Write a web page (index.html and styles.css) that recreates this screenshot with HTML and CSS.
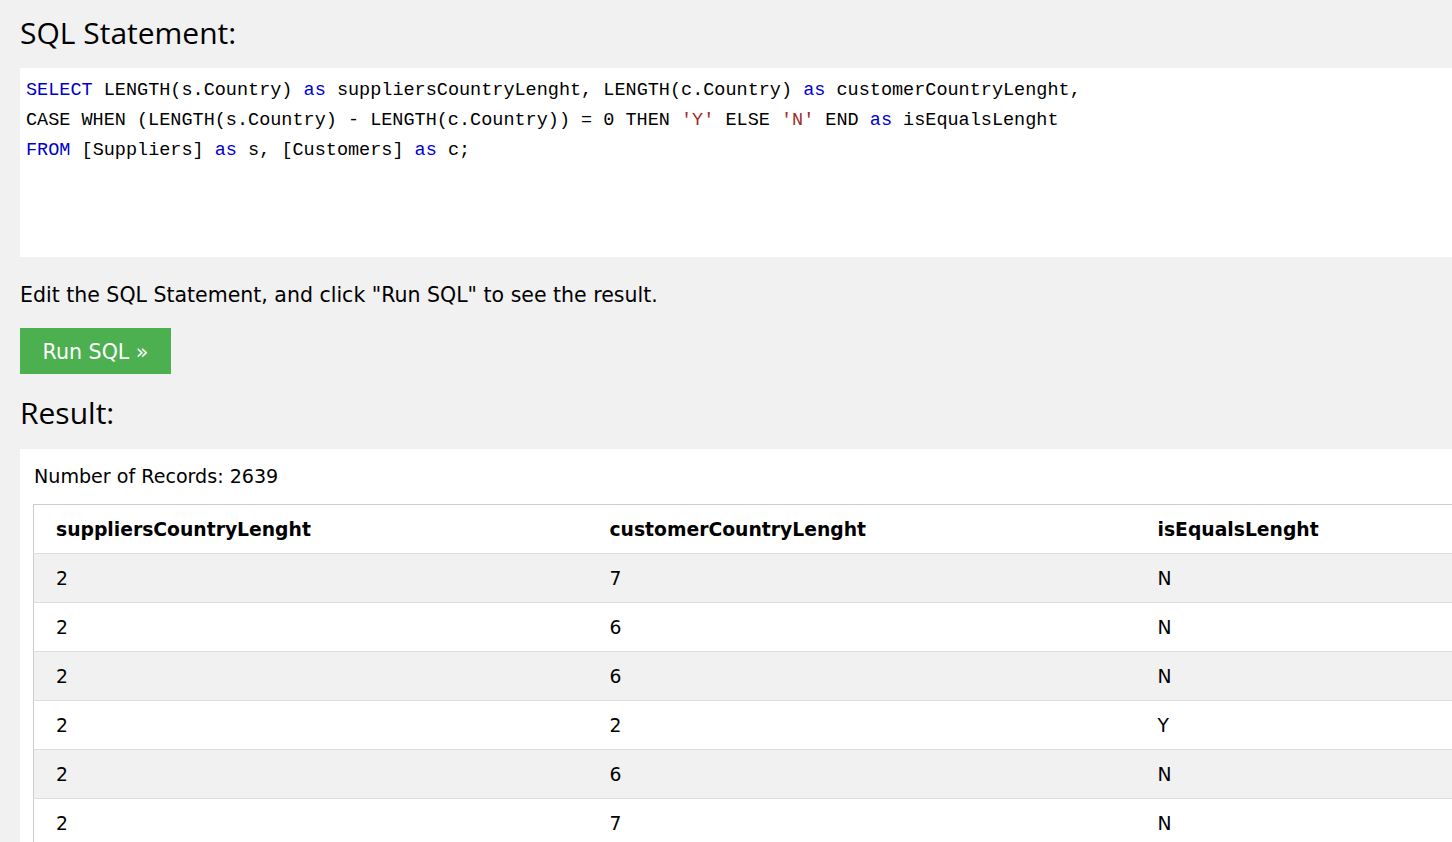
FILE: index.html
```html
<!DOCTYPE html>
<html>
<head>
<meta charset="utf-8">
<link rel="stylesheet" href="styles.css">
</head>
<body>
<div class="page">
  <h2 class="heading heading-first">SQL Statement:</h2>
  <div class="code">
    <div class="code-line"><span class="kw">SELECT</span> LENGTH(s.Country) <span class="kw">as</span> suppliersCountryLenght, LENGTH(c.Country) <span class="kw">as</span> customerCountryLenght,</div>
    <div class="code-line">CASE WHEN (LENGTH(s.Country) - LENGTH(c.Country)) = 0 THEN <span class="str">'Y'</span> ELSE <span class="str">'N'</span> END <span class="kw">as</span> isEqualsLenght</div>
    <div class="code-line"><span class="kw">FROM</span> [Suppliers] <span class="kw">as</span> s, [Customers] <span class="kw">as</span> c;</div>
  </div>
  <p class="hint">Edit the SQL Statement, and click "Run SQL" to see the result.</p>
  <button class="run-btn">Run SQL »</button>
  <h2 class="heading heading-result">Result:</h2>
  <div class="result">
    <div class="records">Number of Records: 2639</div>
    <table class="grid">
      <colgroup><col class="c1"><col class="c2"><col class="c3"></colgroup>
      <thead>
        <tr><th>suppliersCountryLenght</th><th>customerCountryLenght</th><th>isEqualsLenght</th></tr>
      </thead>
      <tbody>
        <tr><td>2</td><td>7</td><td>N</td></tr>
        <tr><td>2</td><td>6</td><td>N</td></tr>
        <tr><td>2</td><td>6</td><td>N</td></tr>
        <tr><td>2</td><td>2</td><td>Y</td></tr>
        <tr><td>2</td><td>6</td><td>N</td></tr>
        <tr><td>2</td><td>7</td><td>N</td></tr>
      </tbody>
    </table>
  </div>
</div>
</body>
</html>
```

FILE: styles.css
```css
html, body {
  margin: 0;
  padding: 0;
  background: #f1f1f1;
  overflow: hidden;
}
body {
  font-family: "DejaVu Sans", Verdana, sans-serif;
  color: #000;
}
.page {
  padding-left: 20px;
  width: 1700px;
}
.heading {
  font-family: "Open Sans", "Noto Sans", sans-serif;
  font-weight: 400;
  font-size: 30px;
  line-height: 40px;
  margin: 0;
}
.heading-first {
  margin-top: 13px;
  margin-bottom: 15px;
}
.heading-result {
  margin-top: 19px;
  margin-bottom: 16px;
}
.code {
  background: #fff;
  height: 181px;
  padding: 8px 0 0 6px;
  font-family: "Liberation Mono", "DejaVu Sans Mono", monospace;
  font-size: 18.5px;
}
.code-line {
  line-height: 30px;
  white-space: pre;
}
.kw { color: #0000cd; }
.str { color: #a52a2a; }
.hint {
  margin: 23px 0 18px;
  font-size: 20.5px;
  line-height: 30px;
}
.run-btn {
  display: block;
  width: 151px;
  height: 46px;
  border: 0;
  background: #4caf50;
  color: #fff;
  font-family: "DejaVu Sans", Verdana, sans-serif;
  font-size: 20.6px;
  padding: 2px 0 0;
  text-align: center;
}
.result {
  background: #fff;
  padding: 15px 0 0 13px;
}
.records {
  font-size: 19.1px;
  line-height: 26px;
  padding-left: 1px;
  margin-bottom: 14px;
}
.grid {
  border-collapse: collapse;
  table-layout: fixed;
  width: 1650px;
  border: 1px solid #ccc;
  font-size: 18.75px;
}
.c1 { width: 554px; }
.c2 { width: 548px; }
.c3 { width: 548px; }
.grid th, .grid td {
  text-align: left;
  height: 48px;
  padding: 0 0 0 22px;
  border-bottom: 1px solid #ddd;
  vertical-align: middle;
}
.grid th { font-weight: 700; }
.grid tbody tr:nth-child(odd) { background: #f1f1f1; }
.grid tbody tr:nth-child(even) { background: #fff; }
```
